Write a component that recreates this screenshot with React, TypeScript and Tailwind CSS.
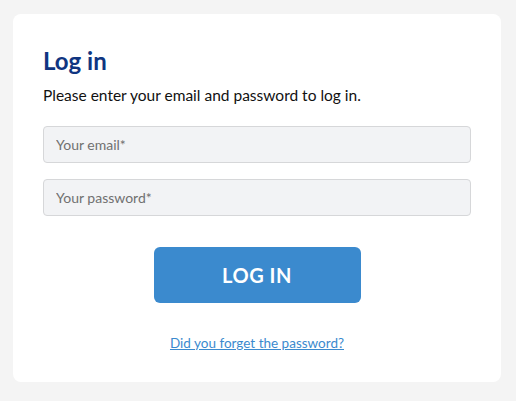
export default function App() {
	return (
		<div
			className="min-h-screen bg-[#f4f4f4] px-[13px] pt-[14px] pb-[19px]"
			style={{ fontFamily: 'Lato, "Noto Sans", sans-serif' }}
		>
			<div className="flex h-[368px] w-[488px] flex-col rounded-lg bg-white px-[30px] pt-[32px]">
				<h1 className="text-[24px] font-bold leading-[30px] text-[#0f3581]">
					Log in
				</h1>
				<p className="mt-[8px] text-[15.5px] leading-[22px] text-[#111]">
					Please enter your email and password to log in.
				</p>
				<form className="mt-[20px] flex flex-col gap-[16px]">
					<input
						type="email"
						placeholder="Your email*"
						className="h-[37px] w-full rounded border border-[#d6d7d9] bg-[#f2f3f5] px-[12px] text-[14px] text-[#333] placeholder:text-[#707070] outline-none"
					/>
					<input
						type="password"
						placeholder="Your password*"
						className="h-[37px] w-full rounded border border-[#d6d7d9] bg-[#f2f3f5] px-[12px] text-[14px] text-[#333] placeholder:text-[#707070] outline-none"
					/>
					<button
						type="button"
						className="mx-auto mt-[15px] h-[56px] w-[207px] rounded-md bg-[#3b8ace] text-[20px] font-bold tracking-[0.5px] text-white"
					>
						LOG IN
					</button>
				</form>
				<a
					href="#"
					className="mx-auto mt-[30px] text-[13.5px] text-[#3b8ace] underline"
				>
					Did you forget the password?
				</a>
			</div>
		</div>
	);
}
